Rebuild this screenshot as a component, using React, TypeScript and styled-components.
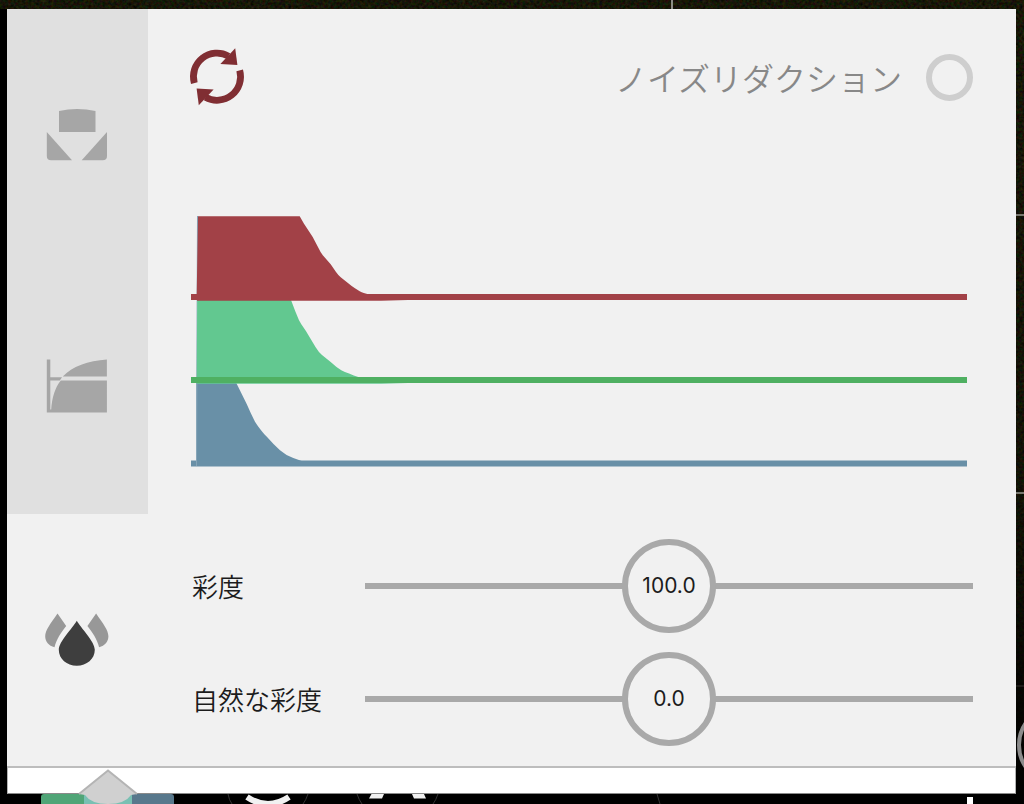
import React, { useState } from "react";
import styled, { createGlobalStyle } from "styled-components";

const GlobalStyle = createGlobalStyle`
  * { box-sizing: border-box; }
  body {
    margin: 0;
    background: #000;
    color: #1c1c1c;
    font-family: "Noto Sans CJK JP", sans-serif;
  }
`;

const Page = styled.div`
  position: relative;
  display: flex;
  flex-direction: column;
  min-height: 100vh;
  padding: 9px 8px 0 7px;
  overflow: hidden;
`;

const Backdrop = styled.svg`
  position: absolute;
  inset: 0;
  width: 100%;
  height: 100%;
`;

const Panel = styled.main`
  position: relative;
  flex: 1;
  display: grid;
  grid-template-columns: 141px 1fr;
  background: #f1f1f1;
`;

const Tabs = styled.nav`
  display: grid;
  grid-template-rows: repeat(3, 1fr);
`;

const TabButton = styled.button<{ $active: boolean }>`
  display: flex;
  align-items: center;
  justify-content: center;
  padding: 0 1px 0 0;
  border: 0;
  background: ${(p) => (p.$active ? "#f1f1f1" : "#e0e0e0")};
  cursor: pointer;
`;

const Content = styled.section`
  display: flex;
  flex-direction: column;
  min-width: 0;
  padding: 39px 43px 20px;
`;

const Header = styled.header`
  display: flex;
  align-items: center;
  justify-content: space-between;
  height: 59px;
`;

const ResetButton = styled.button`
  display: flex;
  padding: 0;
  border: 0;
  background: none;
  cursor: pointer;
  svg {
    overflow: visible;
  }
`;

const ToggleLabel = styled.label`
  display: flex;
  align-items: center;
  gap: 24px;
  color: #888;
  font-size: 32px;
  font-weight: 350;
  line-height: 47px;
  cursor: pointer;
`;

const RingCheckbox = styled.input`
  appearance: none;
  width: 47px;
  height: 47px;
  margin: 0;
  border: 6px solid #cecece;
  border-radius: 50%;
  cursor: pointer;
  &:checked {
    background: #a24147;
  }
`;

const ChartArea = styled.div`
  margin-top: 109px;
  padding-right: 6px;
`;

const Chart = styled.svg`
  display: block;
  width: 100%;
  height: 251px;
`;

const Sliders = styled.div`
  display: grid;
  gap: 19px;
  margin-top: auto;
`;

const SliderRow = styled.div`
  display: grid;
  grid-template-columns: 174px 1fr;
  align-items: center;
`;

const SliderLabel = styled.label`
  font-size: 26px;
  font-weight: 350;
  line-height: 38px;
  padding-left: 1px;
`;

const SliderTrack = styled.div`
  position: relative;
  height: 94px;
`;

const Range = styled.input`
  appearance: none;
  display: block;
  width: 100%;
  height: 94px;
  margin: 0;
  background: linear-gradient(#a9a9a9, #a9a9a9) center / 100% 6px no-repeat;
  cursor: pointer;
  &::-webkit-slider-thumb {
    appearance: none;
    width: 94px;
    height: 94px;
    border: 6px solid #a9a9a9;
    border-radius: 50%;
    background: #f1f1f1;
  }
  &::-moz-range-thumb {
    box-sizing: border-box;
    width: 94px;
    height: 94px;
    border: 6px solid #a9a9a9;
    border-radius: 50%;
    background: #f1f1f1;
  }
`;

const ThumbValue = styled.output`
  position: absolute;
  top: 0;
  width: 94px;
  font-family: Inter, sans-serif;
  font-size: 21px;
  line-height: 94px;
  text-align: center;
  pointer-events: none;
`;

const Strip = styled.div`
  position: relative;
  height: 28px;
  background: #fff;
  border: 1px solid #b4b4b4;
  border-top: 2px solid #bdbdbd;
  border-bottom-color: #8a8a8a;
`;

const Pointer = styled.svg`
  position: absolute;
  z-index: 1;
  left: 69px;
  top: 0;
`;

const Toolbar = styled.footer`
  position: relative;
  height: 10px;
  background: #000;
  overflow: hidden;
`;

const ToolbarArt = styled.svg`
  display: block;
`;

const ToolbarMark = styled.span`
  position: absolute;
  right: 43px;
  bottom: 0;
  width: 6px;
  height: 7px;
  background: #fff;
`;

const BalanceIcon = () => (
  <svg width="64" height="56" viewBox="0 0 64 56" fill="#a6a6a6" aria-hidden="true">
    <path d="M14 4Q32 -.2 50.5 4V25H14Z" />
    <path d="M1.8 25L27 53.3H6.2Q1.8 53.3 1.8 48.9Z" />
    <path d="M62 25L36.7 53.3H57.6Q62 53.3 62 48.9Z" />
  </svg>
);

const CurveIcon = () => (
  <svg width="64" height="56" viewBox="0 0 64 56" fill="#a6a6a6" aria-hidden="true">
    <path d="M1.8 .5H5.3V18.2H17L14.8 21.6H5.3V50.5H6.2C7 39 10 28.5 15.8 21.5H61.9V53.5H1.8Z" />
    <path d="M17.8 17.6C27 7.5 43 1.6 61.9 .5V17.6Z" />
  </svg>
);

const DropsIcon = () => (
  <svg width="64" height="56" viewBox="0 0 64 56" aria-hidden="true">
    <g fill="#989898">
      <path d="M12.5 1.5L21.2 13.9C16 20.5 11.5 27 9.5 35.2C3.8 34 .2 29.5 .2 24.3C.2 17.8 5.5 12 12.5 1.5Z" />
      <path d="M51.1 1.5L42.4 13.9C47.6 20.5 52.1 27 54.1 35.2C59.8 34 63.4 29.5 63.4 24.3C63.4 17.8 58.1 12 51.1 1.5Z" />
    </g>
    <path
      d="M31.8 8.8C36 16.5 49.8 29.5 49.8 37.8C49.8 47 41.8 53.8 31.8 53.8S13.8 47 13.8 37.8C13.8 29.5 27.6 16.5 31.8 8.8Z"
      fill="#3e3e3e"
    />
  </svg>
);

const ResetIcon = () => (
  <svg width="54" height="58" viewBox="1 1 54 58" aria-hidden="true">
    <g fill="none" stroke="#802e33" strokeWidth="6.8">
      <path d="M4.3 35.1A23.6 23.6 0 0 1 38.5 8.1" />
      <path d="M49.7 22.3A23.6 23.6 0 0 1 15.5 49.3" />
    </g>
    <path d="M45.2 .2L47.4 17L30.4 16Z" fill="#802e33" />
    <path d="M8.8 57.2L6.6 40.4L23.6 41.4Z" fill="#802e33" />
  </svg>
);

const Histogram = () => (
  <Chart viewBox="0 0 776 251" preserveAspectRatio="none" role="img" aria-label="RGB">
    <path
      d="M5.3 245V167H45.3L55.7 188Q60 198 64 205.7C68 212 72 217 76.3 221.3Q83 229 89 234.3T102.3 242L110.7 245Z"
      fill="#6990a7"
    />
    <rect y="244.5" width="776" height="6" fill="#6990a7" />
    <path d="M6.5 0L5.5 250" stroke="#86a5b8" fill="none" />
    <path
      d="M5.7 162L6.2 84H100Q104 95 108 104.3C111 110 114.5 114 117.3 119L124.5 131Q127.5 136 131 139L139.7 146Q145 151 150.3 154.3Q157 157.5 168 161.3Z"
      fill="#62c890"
    />
    <path d="M6 167H217L190 167.8H6Z" fill="#62c890" />
    <rect y="161" width="776" height="6" fill="#4fb062" />
    <path
      d="M5.7 79L7 .3H108.7L113 7.7L121.7 21L128 33Q129.5 36.5 132 39.5L139.7 48.3L145 56Q147 59 150 61.5L160.7 70Q167 74.5 170.7 76.3T182 79Z"
      fill="#a24147"
    />
    <path d="M6 84H217L190 84.7H6Z" fill="#a24147" />
    <rect y="78" width="776" height="6" fill="#a24147" />
  </Chart>
);

interface ValueSliderProps {
  id: string;
  label: string;
  min: number;
  max: number;
  initial: number;
}

const ValueSlider = ({ id, label, min, max, initial }: ValueSliderProps) => {
  const [value, setValue] = useState(initial);
  const ratio = (value - min) / (max - min);
  return (
    <SliderRow>
      <SliderLabel htmlFor={id}>{label}</SliderLabel>
      <SliderTrack>
        <Range
          id={id}
          type="range"
          min={min}
          max={max}
          step={0.1}
          value={value}
          onChange={(e) => setValue(Number(e.target.value))}
        />
        <ThumbValue htmlFor={id} style={{ left: `calc((100% - 94px) * ${ratio})` }}>
          {value.toFixed(1)}
        </ThumbValue>
      </SliderTrack>
    </SliderRow>
  );
};

const tabs = [
  { name: "white balance", Icon: BalanceIcon },
  { name: "curve", Icon: CurveIcon },
  { name: "saturation", Icon: DropsIcon },
];

export default function App() {
  const [active, setActive] = useState(2);
  const [reduceNoise, setReduceNoise] = useState(false);

  return (
    <>
      <GlobalStyle />
      <Page>
        <Backdrop viewBox="0 0 1024 804" preserveAspectRatio="none" aria-hidden="true">
          <defs>
            <filter id="grain" x="0" y="0" width="100%" height="100%" colorInterpolationFilters="sRGB">
              <feTurbulence type="fractalNoise" baseFrequency="0.35" numOctaves="2" seed="4" />
              <feColorMatrix values="0.24 0 0 0 -0.03  0 0.22 0 0 -0.02  0 0 0.14 0 -0.04  0 0 0 0 1" />
            </filter>
            <linearGradient id="fade" x1="0" y1="0" x2="0" y2="1">
              <stop offset="0" stopColor="#000" stopOpacity="0" />
              <stop offset="0.6" stopColor="#000" stopOpacity="0.2" />
              <stop offset="1" stopColor="#000" stopOpacity="1" />
            </linearGradient>
          </defs>
          <rect width="1024" height="9" filter="url(#grain)" />
          <rect x="1014" width="10" height="804" filter="url(#grain)" />
          <rect x="1014" width="10" height="804" fill="url(#fade)" />
          <path d="M672 0V9" stroke="#8c8c86" strokeWidth="2" />
          <path d="M1014 215H1024M1014 493H1024" stroke="#77776f" strokeWidth="2" />
          <path d="M1014 686H1024" stroke="#33332e" />
          <circle cx="1058" cy="745" r="39" fill="none" stroke="#8c8c8c" strokeWidth="4" />
        </Backdrop>
        <Panel>
          <Tabs>
            {tabs.map(({ name, Icon }, i) => (
              <TabButton
                key={name}
                type="button"
                aria-label={name}
                aria-pressed={active === i}
                $active={active === i}
                onClick={() => setActive(i)}
              >
                <Icon />
              </TabButton>
            ))}
          </Tabs>
          <Content>
            <Header>
              <ResetButton type="button" aria-label="reset">
                <ResetIcon />
              </ResetButton>
              <ToggleLabel>
                ノイズリダクション
                <RingCheckbox
                  type="checkbox"
                  checked={reduceNoise}
                  onChange={(e) => setReduceNoise(e.target.checked)}
                />
              </ToggleLabel>
            </Header>
            <ChartArea>
              <Histogram />
            </ChartArea>
            <Sliders>
              <ValueSlider id="saturation" label="彩度" min={0} max={200} initial={100} />
              <ValueSlider id="vibrance" label="自然な彩度" min={-100} max={100} initial={0} />
            </Sliders>
          </Content>
        </Panel>
        <Strip>
          <Pointer width="64" height="36" viewBox="0 0 64 36" aria-hidden="true">
            <path d="M7 26H55V36H7Z" fill="#79c0b3" />
            <path d="M2 26L31 2.5L60 26L54 27Q48 36 31 36T8 27Z" fill="#d0d0d0" />
            <path d="M2 26L31 2.5L60 26" fill="none" stroke="#b4b4b4" strokeWidth="2" />
          </Pointer>
        </Strip>
        <Toolbar>
          <ToolbarArt width="700" height="10" viewBox="0 0 700 10" aria-hidden="true">
            <path d="M34 10V3Q34 0 37 0H78V10Z" fill="#50a577" />
            <path d="M124 0H164Q167 0 167 3V10H124Z" fill="#58788c" />
            <path d="M240 3Q261 17 282 3" fill="none" stroke="#f1f1f1" strokeWidth="6" />
            <path d="M364.5 0H377L375 4.5H362ZM405 0H417L419 4.5H407Z" fill="#f1f1f1" />
            <path
              d="M221 0Q222 6 225 10M301 0Q299 6 296 10M350 0Q352 6 355 10M431 0Q429 6 426 10M650 0L653 10"
              fill="none"
              stroke="#333"
            />
          </ToolbarArt>
          <ToolbarMark />
        </Toolbar>
      </Page>
    </>
  );
}
